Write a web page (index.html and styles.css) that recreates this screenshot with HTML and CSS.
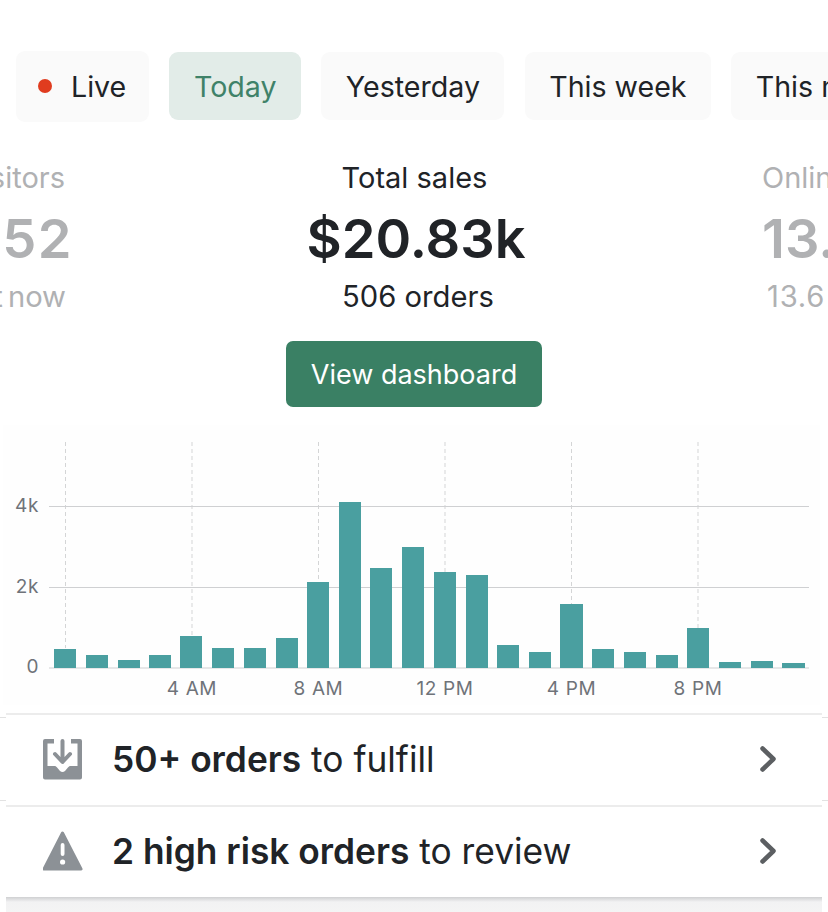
FILE: index.html
```html
<!DOCTYPE html>
<html lang="en">

<head>
    <meta charset="UTF-8" />
    <meta name="viewport" content="width=device-width, initial-scale=1.0" />
    <title>Home</title>
    <link rel="stylesheet" href="styles.css">
</head>

<body>
    <div class="tabs">
        <div class="tab tab-live"><span class="live-dot"></span>Live</div>
        <div class="tab tab-active">Today</div>
        <div class="tab">Yesterday</div>
        <div class="tab">This week</div>
        <div class="tab">This month</div>
    </div>

    <div class="stats">
        <div class="stat stat-left">
            <div class="stat-label">Visitors</div>
            <div class="stat-value">52</div>
            <div class="stat-sub">right now</div>
        </div>
        <div class="stat stat-main">
            <div class="stat-label">Total sales</div>
            <div class="stat-value">$20.83k</div>
            <div class="stat-sub">506 orders</div>
        </div>
        <div class="stat stat-right">
            <div class="stat-label">Online store</div>
            <div class="stat-value">13.6k</div>
            <div class="stat-sub">13.6</div>
        </div>
    </div>

    <div class="actions">
        <button class="dashboard-button">View dashboard</button>
    </div>

    <div class="chart">
        <svg class="chart-svg" width="817" height="280" viewBox="3 425 817 280">
            <!-- hour markers -->
            <line class="marker" x1="65.5" y1="442" x2="65.5" y2="648" />
            <line class="marker" x1="192" y1="442" x2="192" y2="636" />
            <line class="marker" x1="318.5" y1="442" x2="318.5" y2="582" />
            <line class="marker" x1="445" y1="442" x2="445" y2="572" />
            <line class="marker" x1="571.5" y1="442" x2="571.5" y2="604" />
            <line class="marker" x1="698" y1="442" x2="698" y2="628" />

            <line class="grid-line" x1="49" y1="506.5" x2="809" y2="506.5" />
            <line class="grid-line" x1="49" y1="587.5" x2="809" y2="587.5" />
            <line class="grid-line" x1="49" y1="668" x2="809" y2="668" />

            <text class="axis-label" x="39" y="512" text-anchor="end">4k</text>
            <text class="axis-label" x="39" y="593" text-anchor="end">2k</text>
            <text class="axis-label" x="39" y="673" text-anchor="end">0</text>

            <text class="axis-label" x="192" y="695" text-anchor="middle">4 AM</text>
            <text class="axis-label" x="318.5" y="695" text-anchor="middle">8 AM</text>
            <text class="axis-label" x="445" y="695" text-anchor="middle">12 PM</text>
            <text class="axis-label" x="571.5" y="695" text-anchor="middle">4 PM</text>
            <text class="axis-label" x="698" y="695" text-anchor="middle">8 PM</text>

            <rect class="bar" x="54" y="649" width="22" height="19" />
            <rect class="bar" x="86" y="655" width="22" height="13" />
            <rect class="bar" x="118" y="660" width="22" height="8" />
            <rect class="bar" x="149" y="655" width="22" height="13" />
            <rect class="bar" x="180" y="636" width="22" height="32" />
            <rect class="bar" x="212" y="648" width="22" height="20" />
            <rect class="bar" x="244" y="648" width="22" height="20" />
            <rect class="bar" x="276" y="638" width="22" height="30" />
            <rect class="bar" x="307" y="582" width="22" height="86" />
            <rect class="bar" x="339" y="502" width="22" height="166" />
            <rect class="bar" x="370" y="568" width="22" height="100" />
            <rect class="bar" x="402" y="547" width="22" height="121" />
            <rect class="bar" x="434" y="572" width="22" height="96" />
            <rect class="bar" x="466" y="575" width="22" height="93" />
            <rect class="bar" x="497" y="645" width="22" height="23" />
            <rect class="bar" x="529" y="652" width="22" height="16" />
            <rect class="bar" x="560" y="604" width="23" height="64" />
            <rect class="bar" x="592" y="649" width="22" height="19" />
            <rect class="bar" x="624" y="652" width="22" height="16" />
            <rect class="bar" x="656" y="655" width="22" height="13" />
            <rect class="bar" x="687" y="628" width="22" height="40" />
            <rect class="bar" x="719" y="662" width="22" height="6" />
            <rect class="bar" x="751" y="661" width="22" height="7" />
            <rect class="bar" x="782" y="663" width="23" height="5" />
        </svg>
    </div>

    <div class="task-list">
        <div class="task-row">
            <svg class="task-icon" width="40" height="41" viewBox="0 0 40 41">
                <path class="icon-fill" d="M2 0H11V4.5H4.500V27H12C13 27 13.500 28 14.500 29L17 32Q19.500 34 22 32L24.500 29C25.500 28 26 27 27 27H34.500V4.500H28V0H37a2 2 0 0 1 2 2V38.500a2 2 0 0 1-2 2H2a2 2 0 0 1-2-2V2a2 2 0 0 1 2-2z" />
                <path class="icon-stroke" d="M19.500 2V22M12 15L19.500 23L27 15" />
            </svg>
            <div class="task-text"><b>50+ orders</b> to fulfill</div>
            <svg class="task-chevron" width="16" height="26" viewBox="0 0 16 26">
                <path d="M2.500 2.500L13.500 13L2.500 23.500" />
            </svg>
        </div>
        <div class="task-row">
            <svg class="task-icon" width="40" height="41" viewBox="0 0 40 41">
                <path class="icon-fill icon-rounded" d="M19.500 2L38 38H1z" />
                <rect class="icon-mark" x="17.700" y="12" width="3.800" height="13" rx="1.900" />
                <circle class="icon-mark" cx="19.600" cy="31" r="2.600" />
            </svg>
            <div class="task-text"><b>2 high risk orders</b> to review</div>
            <svg class="task-chevron" width="16" height="26" viewBox="0 0 16 26">
                <path d="M2.500 2.500L13.500 13L2.500 23.500" />
            </svg>
        </div>
    </div>
    <div class="page-end"></div>
</body>

</html>
```

FILE: styles.css
```css
html,
body {
    margin: 0;
    padding: 0;
    height: 912px;
    overflow: hidden;
}

body {
    font-family: Inter, "Liberation Sans", sans-serif;
    background-color: #fff;
    color: #202327;
    padding-top: 50px;
    box-sizing: border-box;
}

.tabs {
    display: flex;
    align-items: center;
    gap: 20.200px;
    height: 72px;
    padding-left: 16px;
    overflow: hidden;
}

.tab {
    flex: 0 0 auto;
    display: flex;
    align-items: center;
    height: 68px;
    padding: 0 24.500px;
    border-radius: 9px;
    background: #fafafa;
    font-size: 28.600px;
    white-space: nowrap;
}

.tab-live {
    height: 71px;
    padding: 0 23px 0 22px;
}

.live-dot {
    width: 14px;
    height: 14px;
    border-radius: 50%;
    background: #e03c1f;
    margin-right: 19px;
}

.tab-active {
    background: #e2ece8;
    color: #3f8268;
}

.stats {
    display: grid;
    grid-template-columns: 65px 1fr 66px;
    margin-top: 38px;
    overflow: hidden;
    white-space: nowrap;
}

.stat-left,
.stat-right {
    display: flex;
    flex-direction: column;
    color: #b0b1b3;
}

.stat-left {
    align-items: flex-end;
}

.stat-left .stat-value {
    margin-right: -8px;
    letter-spacing: 1.500px;
}

.stat-left .stat-sub {
    margin-right: -1px;
    word-spacing: -3px;
}

.stat-right {
    align-items: flex-start;
}

.stat-right .stat-sub {
    margin-left: 5px;
    letter-spacing: 0.800px;
}

.stat-main {
    text-align: center;
    padding-left: 2px;
}

.stat-main .stat-value {
    padding-left: 3px;
}

.stat-main .stat-sub {
    padding-left: 7px;
}

.stat-label {
    font-size: 29px;
    line-height: 36px;
}

.stat-value {
    font-size: 54.200px;
    font-weight: 600;
    line-height: 64px;
    margin-top: 10px;
}

.stat-sub {
    font-size: 29.200px;
    line-height: 36px;
    margin-top: 9px;
}

.actions {
    display: flex;
    justify-content: center;
    margin-top: 26px;
}

.dashboard-button {
    width: 256px;
    height: 66px;
    border: none;
    border-radius: 7px;
    background: #3a8064;
    color: #fff;
    font-family: inherit;
    font-size: 27px;
}

.chart {
    margin: 18px 8px 0 3px;
    height: 280px;
    background: #fefefe;
}

.chart-svg {
    display: block;
}

.marker {
    stroke: #d4d5d6;
    stroke-width: 1;
    stroke-dasharray: 4 3;
}

.grid-line {
    stroke: #cfd0d2;
    stroke-width: 1;
}

.axis-label {
    font-size: 19px;
    letter-spacing: 0.6px;
    fill: #6f7379;
}

.bar {
    fill: #4a9fa0;
}

.task-list {
    margin-top: 8px;
    padding: 0 6px;
    height: 184px;
    box-sizing: border-box;
    background:
        linear-gradient(#e2e2e2, #e2e2e2) 0 4px / 100% 1px no-repeat,
        linear-gradient(#e2e2e2, #e2e2e2) 0 87px / 100% 1px no-repeat;
}

.task-row {
    display: flex;
    align-items: center;
    height: 92px;
    box-sizing: border-box;
    padding: 0 46px 2px 37px;
    background: #fff;
    border-top: 2px solid #ececec;
}

.task-icon {
    flex: 0 0 auto;
    margin-right: 29px;
}

.icon-fill {
    fill: #8c9196;
}

.icon-rounded {
    stroke: #8c9196;
    stroke-width: 3;
    stroke-linejoin: round;
}

.icon-stroke {
    fill: none;
    stroke: #8c9196;
    stroke-width: 4;
    stroke-linecap: round;
    stroke-linejoin: round;
}

.icon-mark {
    fill: #fff;
}

.task-text {
    flex: 1;
    font-size: 35.300px;
    white-space: nowrap;
}

.task-text b {
    font-weight: 600;
}

.task-chevron path {
    fill: none;
    stroke: #5c5f62;
    stroke-width: 4.500;
    stroke-linecap: round;
    stroke-linejoin: round;
}

.page-end {
    margin: 0 6px;
    height: 20px;
    background: linear-gradient(to bottom, #cfd0d2, #f2f2f3 5px, #f5f5f5);
}
```
